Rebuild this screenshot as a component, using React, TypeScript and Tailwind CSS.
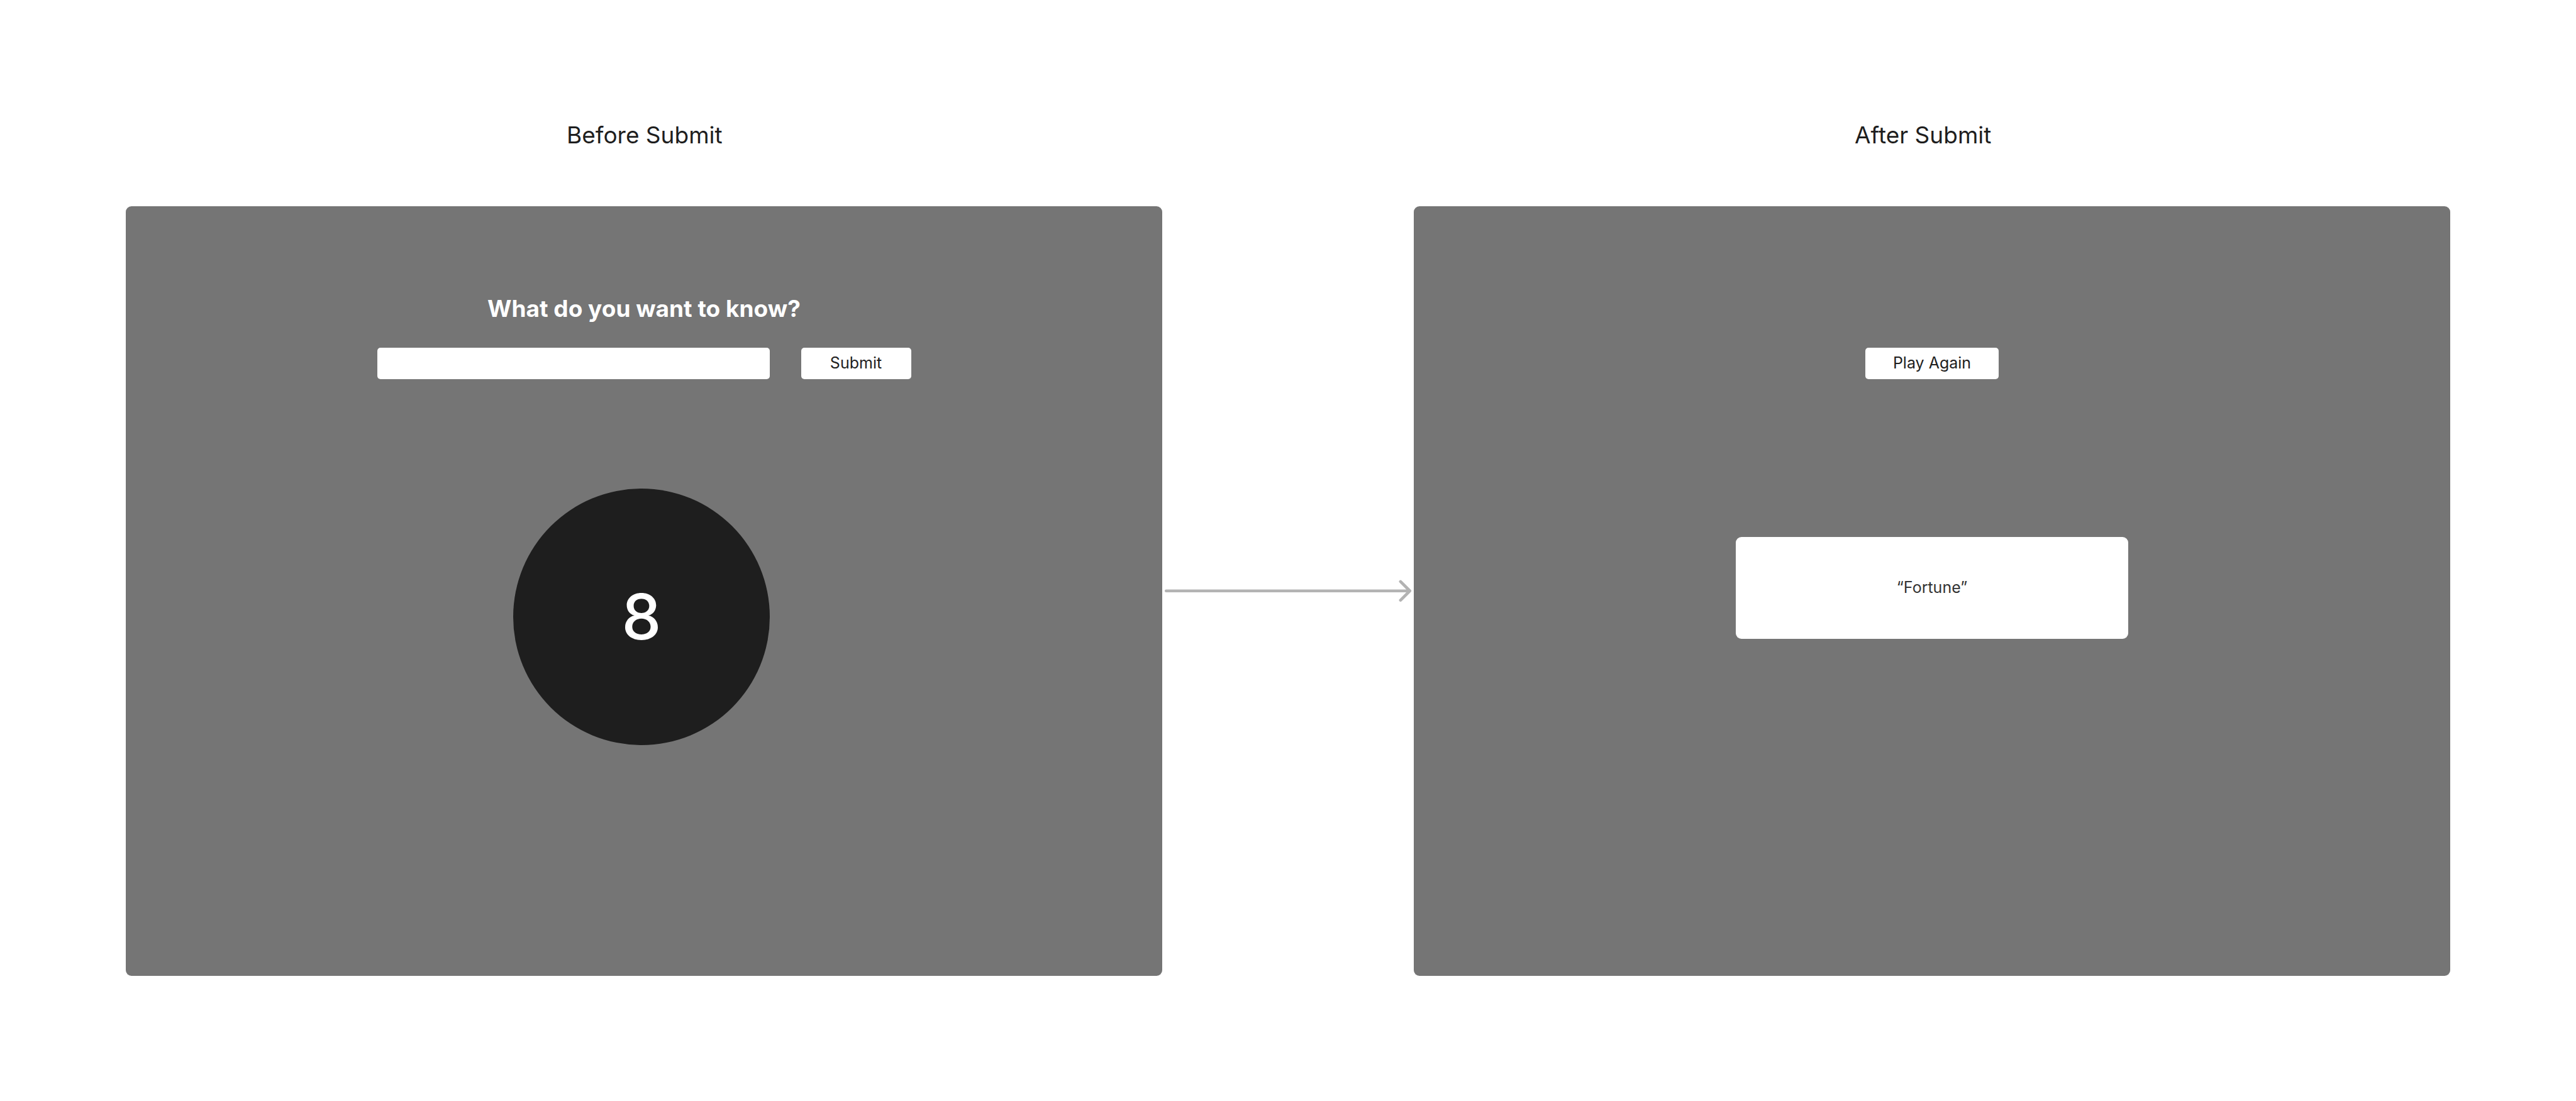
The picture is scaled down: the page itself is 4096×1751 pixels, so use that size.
import React from "react";

function Arrow() {
  return (
    <svg
      viewBox="0 0 512 48"
      className="w-full"
      fill="none"
      stroke="#b3b3b3"
      strokeWidth={6}
      strokeLinecap="round"
      strokeLinejoin="round"
      aria-hidden="true"
    >
      <path d="M8 24H504M485 5L504 24L485 43" />
    </svg>
  );
}

function Title({ children }: { children: React.ReactNode }) {
  return (
    <h2 className="mx-auto mb-[89px] w-[246px] text-[37px] leading-[48px] whitespace-nowrap">
      {children}
    </h2>
  );
}

export default function App() {
  return (
    <main className="grid min-h-screen grid-cols-[1fr_400px_1fr] grid-rows-[auto_auto] content-start bg-white px-[200px] pt-[191px] pb-[199px] font-['Inter',sans-serif] text-[#1e1e1e]">
      <Title>Before Submit</Title>
      <span />
      <Title>After Submit</Title>

      <section className="flex aspect-[66/49] flex-col items-center rounded-[9px] bg-[#757575] pt-[139px]">
        <label
          htmlFor="question"
          className="mb-[38px] text-[37px] leading-[48px] font-bold text-white"
        >
          What do you want to know?
        </label>
        <form
          className="flex gap-[50px]"
          onSubmit={(event) => event.preventDefault()}
        >
          <input
            id="question"
            type="text"
            className="h-[50px] w-[624px] rounded-[5px] bg-white px-4 text-[25px] outline-none"
          />
          <button
            type="submit"
            className="h-[50px] w-[175px] rounded-[5px] bg-white text-[25px]"
          >
            Submit
          </button>
        </form>
        <div className="mt-[174px] pr-2">
          <div className="flex size-[408px] items-center justify-center rounded-full bg-[#1e1e1e] text-[100px] leading-none font-medium text-white">
            8
          </div>
        </div>
      </section>

      <div className="flex items-center">
        <Arrow />
      </div>

      <section className="flex aspect-[66/49] flex-col items-center rounded-[9px] bg-[#757575] pt-[225px]">
        <button
          type="button"
          className="h-[50px] w-[212px] rounded-[5px] bg-white text-[25px]"
        >
          Play Again
        </button>
        <p className="mt-[251px] flex h-[162px] w-[624px] items-center justify-center rounded-[9px] bg-white text-[25px] text-[#333333]">
          “Fortune”
        </p>
      </section>
    </main>
  );
}
